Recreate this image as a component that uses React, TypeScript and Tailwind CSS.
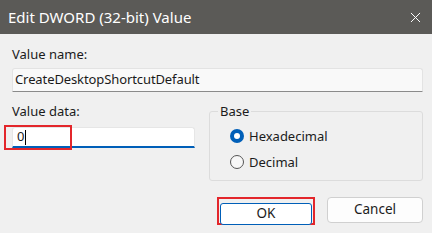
import React from 'react';
import { X } from 'lucide-react';

export default function App() {
  return (
    <div className="w-[432px] h-[233px] overflow-hidden bg-[#f0f0f0] text-[#1b1b1b] font-['Noto_Sans',sans-serif]">
      {/* title bar */}
      <div className="h-[34px] bg-[#5b5a57] flex items-center justify-between pl-[8px] pr-[8px]">
        <span className="text-white text-[15px] leading-none">Edit DWORD (32-bit) Value</span>
        <X size={17} strokeWidth={1.4} className="text-white" />
      </div>

      <div className="pl-[12px] pr-[9px]">
        <div className="mt-[10px] text-[13px] leading-[20px]">Value name:</div>
        <div className="mt-[4px] h-[24px] bg-[#f9f9f9] border border-[#e3e3e3] border-b-[#8b8b8b] rounded-t-[3px] flex items-center pl-[2px] text-[13px] tracking-[-0.1px]">
          CreateDesktopShortcutDefault
        </div>

        <div className="flex justify-between">
          <div className="w-[183px]">
            <div className="mt-[9px] text-[13px] leading-[20px]">Value data:</div>
            <div className="relative mt-[6px]">
              <div className="h-[21px] bg-white border border-[#e6e6e6] border-b-2 border-b-[#005fb8] rounded-t-[3px] flex items-center pl-[4px] text-[13px]">
                0<span className="ml-px w-px h-[15px] bg-black" />
              </div>
              <div className="absolute -left-[8px] -top-[2px] w-[68px] h-[25px] border-2 border-[#e3262b]" />
            </div>
          </div>

          <fieldset className="mt-[9px] w-[214px] border border-[#dcdcdc] rounded-[3px] pl-[8px] pb-[8px]">
            <legend className="px-[2px] text-[13px] leading-[20px]">Base</legend>
            <div className="mt-[5px] ml-[12px] flex items-center h-[20px] gap-[5px]">
              <span className="w-[14px] h-[14px] rounded-full bg-[#005fb8] flex items-center justify-center">
                <span className="w-[6px] h-[6px] rounded-full bg-white" />
              </span>
              <span className="text-[13px] leading-[20px]">Hexadecimal</span>
            </div>
            <div className="mt-[6px] ml-[12px] flex items-center h-[20px] gap-[5px]">
              <span className="w-[14px] h-[14px] rounded-full border border-[#555] bg-[#f7f7f7]" />
              <span className="text-[13px] leading-[20px]">Decimal</span>
            </div>
          </fieldset>
        </div>

        <div className="mt-[16px] flex justify-end gap-[12px]">
          <div className="w-[98px] h-[28px] border-2 border-[#e3262b] p-px">
            <button className="w-full h-full bg-white border border-[#005fb8] rounded-[3px] text-[13.5px] leading-none">OK</button>
          </div>
          <button className="w-[96px] h-[26px] bg-[#fdfdfd] border border-[#d0d0d0] rounded-[4px] text-[13.5px] leading-none">Cancel</button>
        </div>
      </div>
    </div>
  );
}
